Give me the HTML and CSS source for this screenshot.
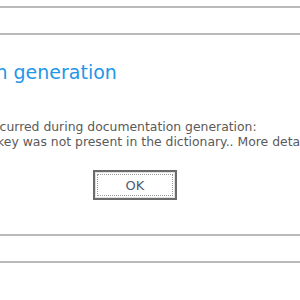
FILE: index.html
```html
<!DOCTYPE html>
<html lang="en">
<head>
    <meta charset="UTF-8">
    <meta name="viewport" content="width=device-width, initial-scale=1.0">
    <title>Documentation generation</title>
    <link rel="stylesheet" href="styles.css">
</head>
<body>
    <div class="page">
        <div class="band"></div>
        <div class="dialog">
            <h1 class="dialog-title">Documentation generation</h1>
            <div class="message">
                <p class="msg-line first">An error occurred during documentation generation:</p>
                <p class="msg-line second">The given key was not present in the dictionary.. More details</p>
            </div>
            <button type="button" class="btn-ok"><span class="btn-focus">OK</span></button>
        </div>
        <div class="band bottom"></div>
    </div>
</body>
</html>
```

FILE: styles.css
```css
:root {
    --rule-color: #bababa;
    --title-color: #1f97e6;
    --text-color: #5a5a5a;
}

* {
    box-sizing: border-box;
    margin: 0;
    padding: 0;
}

body {
    font-family: "DejaVu Sans", Tahoma, sans-serif;
    background-color: #fff;
    color: var(--text-color);
}

.page {
    width: 300px;
    height: 300px;
    overflow: hidden;
}

.band {
    margin-top: 6px;
    height: 29px;
    border-top: 2px solid var(--rule-color);
    border-bottom: 2px solid var(--rule-color);
}

.band.bottom {
    margin-top: 34px;
}

.dialog {
    white-space: nowrap;
}

.dialog-title {
    margin-top: 25px;
    margin-left: -139px;
    font-size: 19px;
    font-weight: normal;
    line-height: 24px;
    color: var(--title-color);
}

.message {
    margin-top: 35px;
    font-size: 12.4px;
    line-height: 15px;
}

.msg-line.first {
    margin-left: -69px;
}

.msg-line.second {
    margin-left: -68px;
}

.btn-ok {
    display: block;
    width: 84px;
    height: 30px;
    margin: 21px 0 0 93px;
    padding: 2px;
    border: 2px solid #6b6b6b;
    background-color: #fff;
    box-shadow: inset 0 0 0 1px #e2e2e2;
    font-family: inherit;
    cursor: pointer;
}

.btn-focus {
    display: flex;
    align-items: center;
    justify-content: center;
    height: 100%;
    border: 1px dotted #9a9a9a;
    font-size: 13px;
    color: #4c5a78;
}
```
